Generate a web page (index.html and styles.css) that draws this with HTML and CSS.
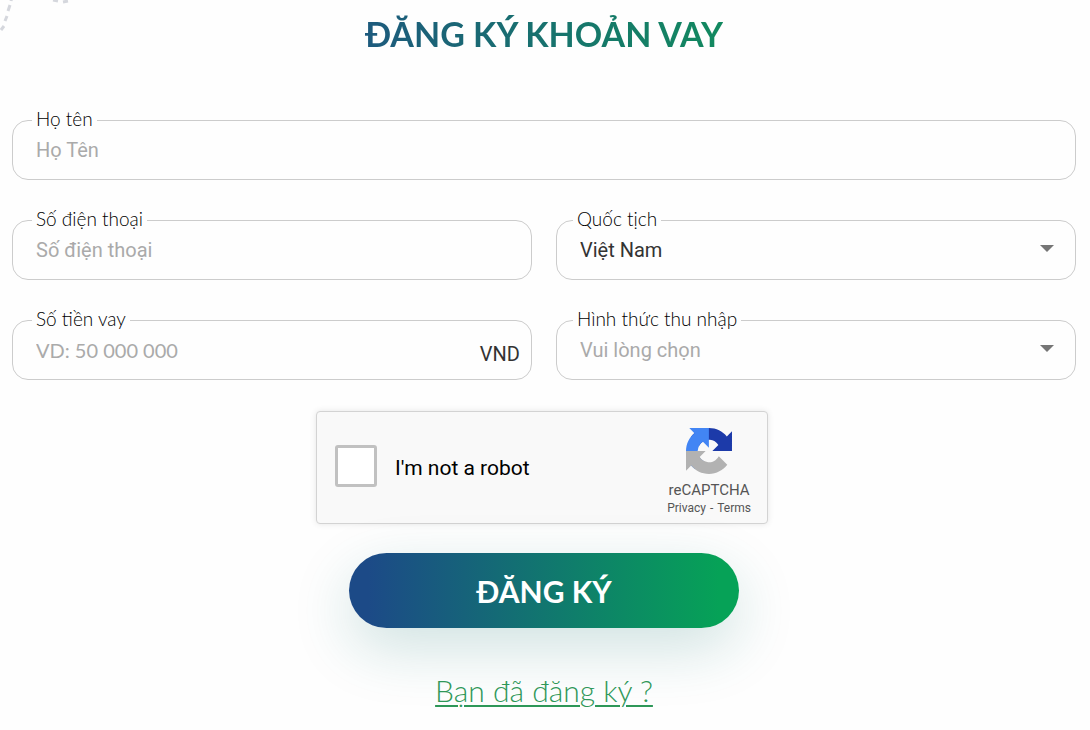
FILE: index.html
```html
<!DOCTYPE html>
<html lang="vi">
<head>
    <meta charset="UTF-8">
    <meta name="viewport" content="width=device-width, initial-scale=1.0">
    <title>Đăng ký khoản vay</title>
    <link rel="stylesheet" href="styles.css">
</head>
<body>

    <svg class="decor" width="80" height="36" viewBox="0 0 80 36" fill="none" stroke="#d5d7dd" stroke-width="3" aria-hidden="true">
        <path d="M12 -3L11 1M10 5L8 11M7 16L5 21M4 26L1 30M53 0L58 1M63 2L68 1"/>
    </svg>

    <main class="loan">
        <h1>ĐĂNG KÝ KHOẢN VAY</h1>

        <form class="loan-form">
            <div class="fields">
                <div class="field full">
                    <label for="name">Họ tên</label>
                    <input type="text" id="name" placeholder="Họ Tên">
                </div>

                <div class="field">
                    <label for="phone">Số điện thoại</label>
                    <input type="tel" id="phone" placeholder="Số điện thoại">
                </div>

                <div class="field select-field">
                    <label for="country">Quốc tịch</label>
                    <select id="country">
                        <option selected>Việt Nam</option>
                    </select>
                    <svg class="arrow" width="14" height="7" viewBox="0 0 14 7" aria-hidden="true"><path d="M0 0h14L7 7z" fill="#757575"/></svg>
                </div>

                <div class="field">
                    <label for="amount">Số tiền vay</label>
                    <input type="text" id="amount" class="amount" inputmode="numeric" placeholder="VD: 50 000 000">
                    <span class="unit">VND</span>
                </div>

                <div class="field select-field">
                    <label for="income">Hình thức thu nhập</label>
                    <select id="income" class="empty">
                        <option value="" selected>Vui lòng chọn</option>
                    </select>
                    <svg class="arrow" width="14" height="7" viewBox="0 0 14 7" aria-hidden="true"><path d="M0 0h14L7 7z" fill="#757575"/></svg>
                </div>
            </div>

            <div class="captcha">
                <input type="checkbox" id="robot">
                <label for="robot">I'm not a robot</label>
                <div class="captcha-brand">
                    <svg width="46" height="46" viewBox="0 0 64 64" aria-hidden="true">
                        <path fill="#1c3aa9" d="M64 31.955l-.033-1.37V4.687l-7.16 7.16C50.948 4.674 42.033.093 32.05.093c-10.4 0-19.622 4.96-25.458 12.64l11.736 11.86a15.55 15.55 0 0 1 4.754-5.334c2.05-1.6 4.952-2.906 8.968-2.906.485 0 .86.057 1.135.163 4.976.393 9.288 3.14 11.828 7.124l-8.307 8.307L64 31.953"/>
                        <path fill="#4285f4" d="M31.862.094l-1.37.033H4.594l7.16 7.16C4.58 13.147 0 22.06 0 32.046c0 10.4 4.96 19.622 12.64 25.458L24.5 45.768a15.55 15.55 0 0 1-5.334-4.754c-1.6-2.05-2.906-4.952-2.906-8.968 0-.485.057-.86.163-1.135.393-4.976 3.14-9.288 7.124-11.828l8.307 8.307L31.86.095"/>
                        <path fill="#b2b2b2" d="M.001 32.045l.033 1.37v25.898l7.16-7.16c5.86 7.173 14.774 11.754 24.76 11.754 10.4 0 19.622-4.96 25.458-12.64l-11.736-11.86a15.55 15.55 0 0 1-4.754 5.334c-2.05 1.6-4.952 2.906-8.968 2.906-.485 0-.86-.057-1.135-.163-4.976-.393-9.288-3.14-11.828-7.124l8.307-8.307c-10.522.04-22.4.066-27.295-.005"/>
                    </svg>
                    <div class="brand-name">reCAPTCHA</div>
                    <div class="brand-links"><a href="#">Privacy</a><span>-</span><a href="#">Terms</a></div>
                </div>
            </div>

            <button type="submit" class="submit-btn">ĐĂNG KÝ</button>
            <a href="#" class="registered">Bạn đã đăng ký ?</a>
        </form>
    </main>

</body>
</html>
```
FILE: styles.css
```css
* {
    box-sizing: border-box;
}

body {
    margin: 0;
    background: #fefefe;
    color: #333;
    font-family: Roboto, sans-serif;
    font-size: 20px;
}

/* Dashed curve in the corner */
.decor {
    position: absolute;
    top: 0;
    left: 0;
}

.loan {
    display: flex;
    flex-direction: column;
    align-items: center;
    padding: 12px 14px 20px 12px;
}

h1 {
    margin: 0 0 64px;
    font-family: Lato, Inter, sans-serif;
    font-size: 34px;
    line-height: 44px;
    font-weight: 700;
    color: transparent;
    background: linear-gradient(90deg, #1d5a7d, #12895f);
    -webkit-background-clip: text;
    background-clip: text;
}

.loan-form {
    display: flex;
    flex-direction: column;
    align-items: center;
    width: 100%;
}

.fields {
    display: grid;
    grid-template-columns: 1fr 1fr;
    gap: 40px 24px;
    width: 100%;
}

.field {
    position: relative;
    display: flex;
}

.full {
    grid-column: 1 / -1;
}

/* Label sits on the top border */
.field label {
    position: absolute;
    top: -11px;
    left: 20px;
    padding: 0 4px;
    background: #fefefe;
    color: #000;
    font-family: Lato, Inter, sans-serif;
    font-size: 19px;
    line-height: 20px;
    font-weight: 300;
}

.select-field label {
    left: 17px;
}

.field input,
.field select {
    width: 100%;
    height: 60px;
    padding: 0 23px;
    border: 1px solid #ccc;
    border-radius: 16px;
    background: transparent;
    color: #333;
    font-family: Roboto, sans-serif;
    font-size: 20px;
    appearance: none;
}

.field input::placeholder {
    color: #aaa;
    opacity: 1;
}

.field .empty {
    color: #aaa;
}

.field .amount {
    padding-right: 64px;
    font-family: Lato, Inter, sans-serif;
}

.unit {
    position: absolute;
    right: 12px;
    top: 22px;
    line-height: 24px;
}

.arrow {
    position: absolute;
    right: 22px;
    top: 25px;
    pointer-events: none;
}

.captcha {
    display: flex;
    align-items: center;
    width: 452px;
    max-width: 100%;
    height: 113px;
    margin: 31px 4px 29px 0;
    padding: 0 16px 0 18px;
    border: 1px solid #d3d3d3;
    border-radius: 4px;
    background: #f9f9f9;
    box-shadow: 0 0 6px rgba(0, 0, 0, 0.1);
}

.captcha input {
    width: 42px;
    height: 42px;
    margin: 0 18px 4px 0;
    border: 3px solid #c1c1c1;
    border-radius: 3px;
    background: #fff;
    appearance: none;
}

.captcha label {
    color: #000;
    font-size: 21px;
}

.captcha-brand {
    margin-left: auto;
    padding-top: 8px;
    color: #555;
    text-align: center;
}

.captcha-brand svg {
    display: block;
    margin: 0 auto 6px;
}

.brand-name {
    font-size: 15px;
    line-height: 20px;
}

.brand-links {
    font-size: 12px;
    line-height: 16px;
}

.brand-links span {
    margin: 0 4px;
}

.brand-links a {
    color: #555;
    text-decoration: none;
}

.submit-btn {
    width: 390px;
    max-width: 100%;
    height: 75px;
    border: none;
    border-radius: 38px;
    background: linear-gradient(90deg, #1c4a87 5%, #06a257 95%);
    box-shadow: 0 20px 60px rgba(18, 117, 110, 0.2);
    color: #fff;
    font-family: Lato, Inter, sans-serif;
    font-size: 30px;
    font-weight: 700;
    cursor: pointer;
}

.registered {
    margin-top: 44px;
    color: #2e9758;
    font-family: Lato, Inter, sans-serif;
    font-size: 30px;
    line-height: 36px;
    font-weight: 300;
    text-decoration-thickness: 2px;
    text-underline-offset: 3px;
}
```
